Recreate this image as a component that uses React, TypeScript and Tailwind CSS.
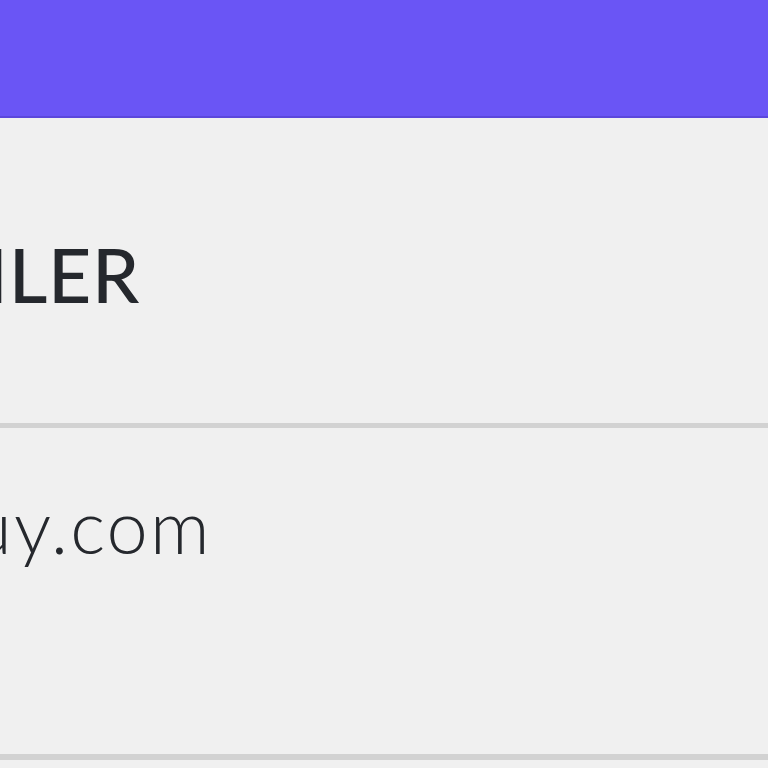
export default function App() {
  return (
    <div className="w-[768px] h-[768px] overflow-hidden bg-[#f0f0f0] font-['Lato',sans-serif] text-[#25282d]">
      <div className="h-[118px] bg-[#6a55f5] border-b-2 border-[#5b47dc]" />
      <div className="h-[305px] pt-[7px] flex items-center overflow-hidden">
        <span className="ml-[-62px] text-[75px] font-medium tracking-[0.01em] leading-none whitespace-nowrap">
          MLER
        </span>
      </div>
      <div className="h-[5px] bg-[#d2d2d2]" />
      <div className="h-[326px] pt-[61px] overflow-hidden">
        <span className="block ml-[-29px] text-[74px] font-light tracking-[0.03em] leading-none whitespace-nowrap">
          uy.com
        </span>
      </div>
      <div className="h-[6px] bg-[#d2d2d2]" />
    </div>
  );
}
